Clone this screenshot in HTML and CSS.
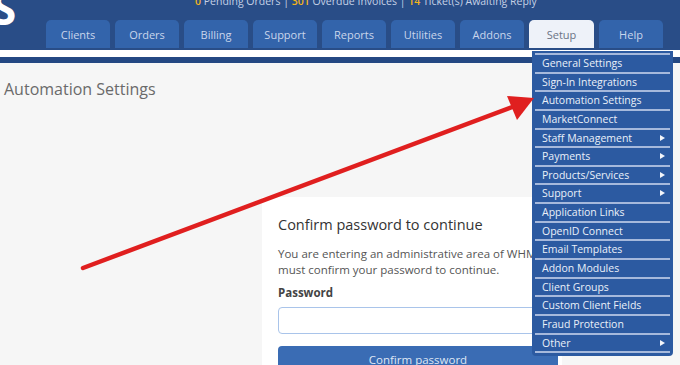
FILE: index.html
```html
<!DOCTYPE html>
<html>
<head>
<meta charset="utf-8">
<link rel="stylesheet" href="styles.css">
</head>
<body>
<header class="header">
  <div class="logo">S</div>
  <div class="stats"><span class="num">0</span> Pending Orders | <span class="num">301</span> Overdue Invoices | <span class="num">14</span> Ticket(s) Awaiting Reply</div>
  <nav class="tabs">
    <a class="tab">Clients</a>
    <a class="tab">Orders</a>
    <a class="tab">Billing</a>
    <a class="tab">Support</a>
    <a class="tab">Reports</a>
    <a class="tab">Utilities</a>
    <a class="tab">Addons</a>
    <a class="tab active">Setup</a>
    <a class="tab">Help</a>
  </nav>
</header>
<div class="strip"></div>
<div class="rule"></div>
<main class="main">
  <h1 class="title">Automation Settings</h1>
  <section class="card">
    <h2 class="card-title">Confirm password to continue</h2>
    <p class="card-text">You are entering an administrative area of WHMCS. You must confirm your password to continue.</p>
    <label class="label">Password</label>
    <div class="input"></div>
    <div class="button">Confirm password</div>
  </section>
</main>
<ul class="menu">
  <li>General Settings</li>
  <li>Sign-In Integrations</li>
  <li>Automation Settings</li>
  <li>MarketConnect</li>
  <li class="sub">Staff Management</li>
  <li class="sub">Payments</li>
  <li class="sub">Products/Services</li>
  <li class="sub">Support</li>
  <li>Application Links</li>
  <li>OpenID Connect</li>
  <li>Email Templates</li>
  <li>Addon Modules</li>
  <li>Client Groups</li>
  <li>Custom Client Fields</li>
  <li>Fraud Protection</li>
  <li class="sub">Other</li>
</ul>
<svg class="arrow" width="680" height="365" viewBox="0 0 680 365">
  <line x1="83" y1="268" x2="515" y2="106" stroke="#e01f1f" stroke-width="4.5" stroke-linecap="round"/>
  <polygon points="534,98 507,96 517,120" fill="#e01f1f"/>
</svg>
</body>
</html>
```
FILE: styles.css
```css
* { box-sizing: border-box; }
html, body { margin: 0; padding: 0; }
body {
  width: 680px;
  height: 365px;
  overflow: hidden;
  background: #f6f6f6;
  font-family: "Open Sans", "DejaVu Sans", sans-serif;
  position: relative;
}
.header {
  height: 50px;
  background: #294d87;
  position: relative;
  display: flex;
  flex-direction: column;
  justify-content: flex-end;
}
.logo {
  position: absolute;
  left: -8px;
  top: -14px;
  color: #fff;
  font-size: 44px;
  font-weight: 700;
  line-height: 1;
}
.stats {
  position: absolute;
  left: 195px;
  top: -6px;
  font-size: 10.5px;
  color: #c5d1e6;
  white-space: nowrap;
}
.stats .num { color: #f3b41b; font-weight: 600; }
.tabs {
  display: flex;
  gap: 5px;
  padding-left: 46px;
  height: 28px;
  margin-bottom: 2px;
}
.tab {
  width: 64px;
  height: 28px;
  background: #3364ab;
  border-radius: 5px 5px 0 0;
  color: #c9d6ec;
  font-size: 11px;
  display: flex;
  align-items: center;
  justify-content: center;
}
.tab.active {
  background: #eef2f9;
  color: #6b7485;
  width: 65px;
}
.strip { height: 7px; background: #ffffff; }
.rule { height: 6px; background: #244883; }
.main {
  position: relative;
  padding: 16px 0 0 4px;
}
.title {
  margin: 0;
  font-size: 16px;
  font-weight: 400;
  color: #6a6a6a;
  line-height: 20px;
}
.card {
  margin: 98px 0 0 258px;
  width: 300px;
  height: 168px;
  overflow: hidden;
  background: #ffffff;
  padding: 18px 16px 0;
}
.card-title {
  margin: 0;
  font-size: 14.5px;
  font-weight: 400;
  color: #333;
  line-height: 20px;
}
.card-text {
  margin: 11px 0 0;
  width: 316px;
  font-size: 11.5px;
  line-height: 16px;
  color: #555;
}
.label {
  display: block;
  margin-top: 7px;
  font-size: 11.5px;
  font-weight: 700;
  color: #444;
  line-height: 16px;
}
.input {
  margin-top: 6px;
  width: 280px;
  height: 27px;
  border: 1px solid #a9c4ea;
  border-radius: 4px;
  background: #fff;
}
.button {
  margin-top: 12px;
  width: 280px;
  height: 26px;
  background: #3a6cb4;
  border-radius: 4px 4px 0 0;
  color: #dfe7f4;
  font-size: 11.5px;
  display: flex;
  align-items: center;
  justify-content: center;
}
.menu {
  position: absolute;
  left: 532px;
  top: 51px;
  width: 141px;
  margin: 0;
  padding: 2px 3px 3px;
  list-style: none;
  background: #2c5aa1;
  border-radius: 0 0 4px 4px;
}
.menu li {
  height: 18.65px;
  border-top: 2px solid #a6b9dc;
  color: #eaf0f9;
  font-size: 10.5px;
  line-height: 16px;
  padding-left: 7px;
  position: relative;
  white-space: nowrap;
}
.menu li:last-child { border-bottom: 2px solid #a6b9dc; height: 20.65px; }
.menu li.sub::after {
  content: "";
  position: absolute;
  right: 5px;
  top: 5px;
  border-left: 5px solid #f4f6fa;
  border-top: 3.5px solid transparent;
  border-bottom: 3.5px solid transparent;
}
.arrow {
  position: absolute;
  left: 0;
  top: 0;
  pointer-events: none;
}
```
